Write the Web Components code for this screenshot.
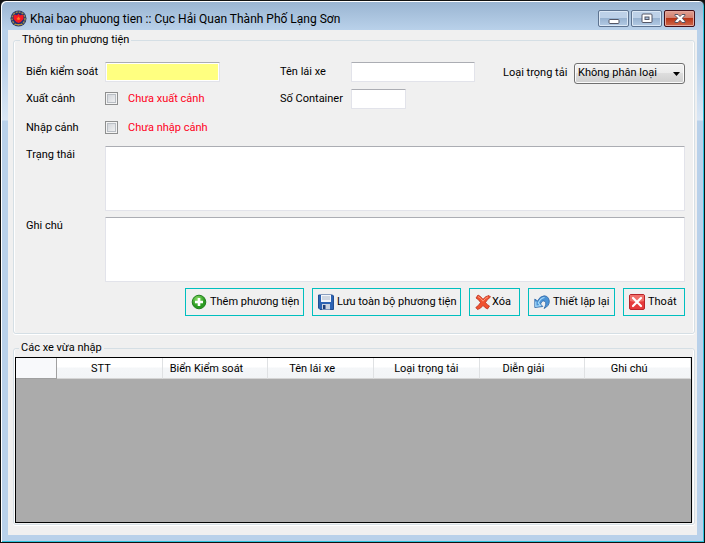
<!DOCTYPE html>
<html lang="vi">
<head>
<meta charset="utf-8">
<title>Khai bao phuong tien</title>
<style>
html { background: #111; }
body { margin: 0; font: 11px/14px Roboto, "Liberation Sans", Arial, sans-serif; color: #000; }
.form { display: grid; grid-template-columns: 254fr 223fr 182fr; gap: 6px 0; grid-template-rows: 21px 23px 22px auto; }
.all { grid-column: 1 / -1; }
.actions { grid-column: 1 / -1; display: flex; flex-wrap: wrap; justify-content: flex-end; gap: 8px; }
</style>
</head>
<body>
<app-window caption="Khai bao phuong tien :: Cục Hải Quan Thành Phố Lạng Sơn">
  <group-box caption="Thông tin phương tiện">
    <div class="form">
      <text-field label="Biển kiểm soát" tone="yellow" style="--label:79px;--field:115px"></text-field>
      <text-field label="Tên lái xe" style="--label:71px;--field:124px"></text-field>
      <select-field label="Loại trọng tải" value="Không phân loại"></select-field>
      <check-field label="Xuất cảnh" state="Chưa xuất cảnh"></check-field>
      <text-field label="Số Container" style="--label:71px;--field:55px"></text-field>
      <span></span>
      <check-field class="all" label="Nhập cảnh" state="Chưa nhập cảnh"></check-field>
      <memo-field class="all" label="Trạng thái"></memo-field>
      <memo-field class="all" label="Ghi chú"></memo-field>
      <div class="actions">
        <icon-button icon="add" style="--w:119px">Thêm phương tiện</icon-button>
        <icon-button icon="save" style="--w:149px">Lưu toàn bộ phương tiện</icon-button>
        <icon-button icon="delete" style="--w:51px">Xóa</icon-button>
        <icon-button icon="undo" style="--w:87px">Thiết lập lại</icon-button>
        <icon-button icon="exit" style="--w:62px">Thoát</icon-button>
      </div>
    </div>
  </group-box>
  <group-box class="list" fill caption="Các xe vừa nhập">
    <vehicle-grid columns="STT|Biển Kiểm soát|Tên lái xe|Loại trọng tải|Diễn giải|Ghi chú"></vehicle-grid>
  </group-box>
</app-window>

<script>
const define = (name, render) => customElements.define(name, class extends HTMLElement {
  connectedCallback() {
    if (this.shadowRoot) return;
    const root = this.attachShadow({ mode: 'open' });
    const t = document.createElement('template');
    t.innerHTML = render(k => this.getAttribute(k) || '');
    root.append(t.content.cloneNode(true));
  }
});

define('app-window', a => `
<style>
:host { display: block; }
* { box-sizing: border-box; }
.frame { min-height: 100vh; display: flex; flex-direction: column; padding: 1px 7px 7px 6px; border: 1px solid #111; border-radius: 6px 6px 0 0;
  background: linear-gradient(#99b4d1, #b9d1ea 29px, #b9d1ea 60px, #dae7f5 119px, #b9d1ea 120px);
  box-shadow: inset 1px 1px #fff, inset -1px -1px #2fc3dd; }
header { display: flex; align-items: center; height: 28px; padding: 4px 2px 0 3px; }
header > svg { flex: none; margin-right: 3px; }
h1 { flex: 1; margin: 0; padding-top: 1px; font: 12px/16px Roboto, "Open Sans", sans-serif; white-space: nowrap; overflow: hidden; }
.controls { display: flex; gap: 2px; }
button { width: 31px; height: 17px; padding: 0; display: grid; place-items: center; border: 1px solid #5d7390; border-radius: 2px; box-shadow: inset 0 0 0 1px #dbe8f6;
  background: linear-gradient(#bdd1e8 0 48%, #98b3d1 50%, #b3cbe5); }
button.close { border-color: #431019; box-shadow: inset 0 0 0 1px #e5a79b; background: linear-gradient(#e0a093 0, #d27f6c 48%, #b93517 50%, #cf6a4c); }
main { flex: 1; display: flex; flex-direction: column; gap: 7px; margin: 0 0 0 1px; padding: 3px 2px 10px 5px; background: #f0f0f0; }
</style>
<div class="frame">
<header>
<svg width="17" height="17" viewBox="0 0 17 17"><circle cx="8.500" cy="8.500" r="8" fill="#26356d"/><circle cx="8.500" cy="8.500" r="6.500" fill="none" stroke="#9b8c4c" stroke-width="1.500" stroke-dasharray="2 1"/><circle cx="8.500" cy="8.500" r="5.200" fill="#222d75"/><path d="M3.500 5.500Q5.500 4 7 5.500L8.500 3.500 10 5.500Q11.500 4 13.500 5.500V9Q11 12.500 8.500 13 6 12.500 3.500 9Z" fill="#f51822"/><path d="M8.500 6.500 9.200 7.700 10.500 8 9.500 9 9.700 10.300 8.500 9.700 7.300 10.300 7.500 9 6.500 8 7.800 7.700Z" fill="#ff7a20"/><path d="M4.500 14.500h8" stroke="#b39340"/></svg>
<h1>${a('caption')}</h1>
<div class="controls">
<button aria-label="Thu nhỏ"><svg width="12" height="13" viewBox="0 0 12 13"><rect x="1" y="7.500" width="10" height="4" rx="1" fill="#fff" stroke="#535666"/></svg></button>
<button aria-label="Phóng to"><svg width="12" height="11" viewBox="0 0 12 11"><rect x="1" y="1" width="10" height="8.500" rx="1" fill="#fff" stroke="#535666"/><rect x="4" y="4" width="4" height="2.500" fill="#a8c0dc" stroke="#535666"/></svg></button>
<button class="close" aria-label="Đóng"><svg width="12" height="11" viewBox="0 0 12 11"><path d="M1 1.500H4L6 3.500 8 1.500H11V2.500L8.200 5.300 11 8.200V9.500H8L6 7.300 4 9.500H1V8.200L3.800 5.300 1 2.500Z" fill="#fff" stroke="#535666"/></svg></button>
</div>
</header>
<main><slot></slot></main>
</div>`);

define('group-box', a => `
<style>
:host { display: block; }
:host([fill]) { flex: 1; display: flex; }
fieldset { box-sizing: border-box; flex: 1; min-width: 0; width: 100%; margin: 0; padding: 15px 9px 17px 12px; border: 1px solid #d5dfe5; border-radius: 3px;
  box-shadow: inset 1px 0 #fff, inset -1px 0 #fff, 0 1px #fff; }
:host([fill]) fieldset { padding: 2px 2px 1px 1px; display: flex; flex-direction: column; }
legend { margin-left: -6px; padding: 0 2px; line-height: 14px; }
:host([fill]) legend { margin-left: 4px; }
</style>
<fieldset><legend>${a('caption')}</legend><slot></slot></fieldset>`);

const fieldCss = `
:host { display: block; min-width: 0; }
* { box-sizing: border-box; }
label { white-space: nowrap; }
input, textarea { font: inherit; margin: 0; padding: 2px; background: #fff; border: 1px solid #e2e3ea; border-top-color: #abadb3; border-radius: 1px; outline: 0; }`;

define('text-field', a => `
<style>${fieldCss}
.row { display: grid; grid-template-columns: var(--label) minmax(0, 1fr); }
label { padding-top: 3px; }
input { width: var(--field); max-width: 100%; height: 20px; }
:host([tone="yellow"]) input { background: #ffff80; box-shadow: inset 0 0 0 1px #fff; }
</style>
<div class="row"><label for="f">${a('label')}</label><input id="f" type="text"></div>`);

define('select-field', a => `
<style>${fieldCss}
.row { display: grid; grid-template-columns: 71px minmax(0, 1fr); }
label { padding-top: 4px; }
.box { display: grid; align-items: center; padding-top: 1px; }
select, svg { grid-area: 1 / 1; }
select { appearance: none; width: 100%; height: 21px; padding: 0 12px 1px 3px; font: inherit; color: #000; border: 1px solid #707070; border-radius: 3px;
  box-shadow: inset 0 0 0 1px #fafafa; background: linear-gradient(#f2f2f2, #ebebeb 50%, #dddddd 50%, #cfcfcf); }
svg { justify-self: end; margin-right: 5px; pointer-events: none; }
</style>
<div class="row"><label for="f">${a('label')}</label><div class="box"><select id="f"><option>${a('value')}</option></select><svg width="7" height="4" viewBox="0 0 7 4"><path d="M0 0h7L3.500 4Z"/></svg></div></div>`);

define('check-field', a => `
<style>${fieldCss}
.row { display: grid; grid-template-columns: 79px 23px 1fr; padding-top: 3px; }
input { appearance: none; width: 13px; height: 13px; padding: 0; border: 1px solid #8e8f8f; border-radius: 0; box-shadow: inset 0 0 0 1px #f4f4f4, inset 0 0 0 2px #b9bec4;
  background: linear-gradient(135deg, #cbcfd5, #f6f6f6); }
.state { color: #ff0020; }
</style>
<div class="row"><label for="f">${a('label')}</label><input id="f" type="checkbox"><label class="state" for="f">${a('state')}</label></div>`);

define('memo-field', a => `
<style>${fieldCss}
.row { display: grid; grid-template-columns: 79px 1fr; }
label { padding-top: 2px; }
textarea { display: block; width: 100%; height: 65px; resize: none; }
</style>
<div class="row"><label for="f">${a('label')}</label><textarea id="f"></textarea></div>`);

const icons = {
  add: `<defs><radialGradient id="g" cx=".4" cy=".3"><stop offset="0" stop-color="#8ee06a"/><stop offset="1" stop-color="#2b9a22"/></radialGradient></defs><circle cx="8" cy="8" r="6.800" fill="url(#g)" stroke="#23801f"/><path d="M8 4v8M4 8h8" stroke="#fff" stroke-width="2.600"/>`,
  save: `<path d="M.5 1h14l1 1v13.500H2L.5 14Z" fill="#2c63b4" stroke="#234e91"/><path d="M3 1h10v7H3Z" fill="#f2f5fa"/><path d="M4 3h8M4 5h8" stroke="#a9b6c8"/><path d="M4 10h8v5.500H4Z" fill="#c9d2e0"/><path d="M5 11h2.500v4H5Z" fill="#1f3e78"/>`,
  delete: `<path d="M3 1Q5.500 2 8 5.300 10.500 2 14 1.500L15.500 3Q12 5.500 10.500 8.500 12 11 14.500 12L12.500 15Q9.500 13.500 8 11.500 5.500 15 2.500 15.500L.8 13.500Q4 11.500 5.500 8.500 4 5.500 1 4Z" fill="#f0512f" stroke="#b92e1d" stroke-width=".8"/><path d="M3 2.500Q6 4 8 7.200 10 4.200 13 2.800" fill="none" stroke="#ff987a"/>`,
  undo: `<path d="M.8 5V13.500L8.800 12.500 6.500 10Q8.500 5.500 11 7.500 13 9.500 10 14.500 15.500 12 15.300 7 14.500 2 10.200 1.800 6 2 3.500 7Z" fill="#4b93d6" stroke="#2f66a4" stroke-width=".8"/><path d="M1.800 7.500V12.300L6.500 11.600 4.300 9Q6.500 4 10.500 3.500" fill="none" stroke="#a9dcfa" stroke-width="1.200"/>`,
  exit: `<rect x=".5" y=".5" width="15" height="15" rx="1.500" fill="#e63b3c" stroke="#b8242a"/><path d="M1 1h14v6Q8 9 1 7Z" fill="#f0706a"/><path d="m4 4 8 8M12 4l-8 8" stroke="#fff" stroke-width="2.200" stroke-linecap="round"/>`
};
define('icon-button', a => `
<style>
:host { display: block; }
button { display: flex; align-items: center; gap: 3px; height: 28px; min-width: var(--w); margin: 0; padding: 0 2px 0 5px; font: inherit; color: #000; background: #f0f0f0; border: 1px solid #00bfbf; white-space: nowrap; }
svg { flex: none; }
:host([icon="delete"]) button { gap: 1px; }
</style>
<button type="button"><svg width="16" height="16" viewBox="0 0 16 16">${icons[a('icon')]}</svg><slot></slot></button>`);

define('vehicle-grid', a => `
<style>
:host { flex: 1; display: block; min-height: 100px; background: #ababab; border: 1px solid #000; }
table { width: 100%; table-layout: fixed; border-collapse: separate; border-spacing: 0; }
th { box-sizing: border-box; height: 21px; padding: 2px 17px 0 0; font-weight: normal; text-align: center; white-space: nowrap;
  background: linear-gradient(#fff 0 45%, #f4f6f8 50%, #f2f4f6); border-right: 1px solid #dfe1e3; border-bottom: 1px solid #d5d5d5; }
th:first-child { width: 41px; background: #f8f9fb; border-right: 1px solid #a0a0a0; border-bottom-color: #a0a0a0; }
th:nth-child(5) { padding-right: 0; }
</style>
<table><thead><tr><th></th>${a('columns').split('|').map(c => `<th scope="col">${c}</th>`).join('')}</tr></thead><tbody></tbody></table>`);
</script>
</body>
</html>
